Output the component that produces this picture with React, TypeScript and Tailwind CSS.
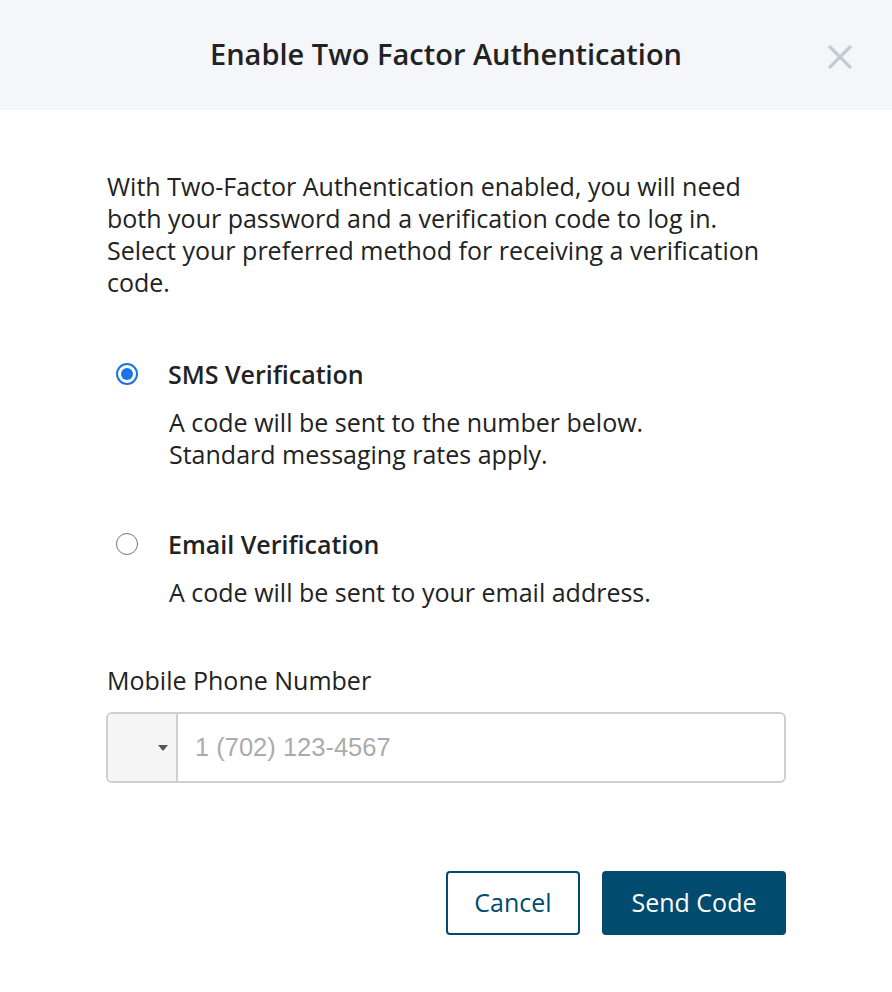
import React, { useState } from "react";

type Method = "sms" | "email";

const FONT = { fontFamily: '"Open Sans", "Noto Sans", sans-serif' };

function Radio({ checked }: { checked: boolean }) {
  return checked ? (
    <span className="flex h-[22px] w-[22px] items-center justify-center rounded-full border-2 border-[#1a73e8] bg-white">
      <span className="block h-[12px] w-[12px] rounded-full bg-[#1a73e8]" />
    </span>
  ) : (
    <span className="block h-[22px] w-[22px] rounded-full border border-[#767676] bg-white" />
  );
}

export default function App() {
  const [method, setMethod] = useState<Method>("sms");

  const options: { id: Method; label: string; lines: string[] }[] = [
    {
      id: "sms",
      label: "SMS Verification",
      lines: [
        "A code will be sent to the number below.",
        "Standard messaging rates apply.",
      ],
    },
    {
      id: "email",
      label: "Email Verification",
      lines: ["A code will be sent to your email address."],
    },
  ];

  return (
    <div className="h-[992px] w-[892px] bg-white text-[#222]" style={FONT}>
      {/* Header */}
      <div className="relative flex h-[110px] items-center justify-center bg-[#f5f6f9] pb-[4px]">
        <h1 className="text-[29px] font-semibold leading-none text-[#222]">
          Enable Two Factor Authentication
        </h1>
        <button className="absolute right-[40px] top-[45px] h-[24px] w-[24px]">
          <svg viewBox="0 0 24 24" width="24" height="24">
            <path
              d="M2 2 L22 22 M22 2 L2 22"
              stroke="#c3cbd6"
              strokeWidth="3.2"
              strokeLinecap="round"
            />
          </svg>
        </button>
      </div>

      {/* Body */}
      <div className="px-[107px] pt-[60px]">
        <p className="text-[25px] leading-[32px]">
          With Two-Factor Authentication enabled, you will need both your
          password and a verification code to log in. Select your preferred
          method for receiving a verification code.
        </p>

        <div className="mt-[60px] flex flex-col gap-[58px]">
          {options.map((opt) => (
            <div
              key={opt.id}
              className="cursor-pointer"
              onClick={() => setMethod(opt.id)}
            >
              <div className="flex items-center">
                <span className="ml-[9px] mr-[30px] block">
                  <Radio checked={method === opt.id} />
                </span>
                <span className="text-[25px] font-semibold leading-[32px]">
                  {opt.label}
                </span>
              </div>
              <div className="ml-[62px] mt-[16px] text-[25px] leading-[32px]">
                {opt.lines.map((line) => (
                  <div key={line}>{line}</div>
                ))}
              </div>
            </div>
          ))}
        </div>

        <label className="mt-[56px] block text-[25px] leading-[32px]">
          Mobile Phone Number
        </label>

        <div className="-ml-[1px] mt-[16px] flex h-[71px] w-[680px] overflow-hidden rounded-[6px] border-2 border-[#cfcfcf]">
          <div className="flex w-[70px] items-center justify-end border-r-2 border-[#cfcfcf] bg-[#f5f5f5] pr-[8px]">
            <span className="h-0 w-0 border-x-[5px] border-t-[6px] border-x-transparent border-t-[#555]" />
          </div>
          <input
            className="flex-1 pl-[17px] text-[25.5px] text-[#333] outline-none placeholder:text-[#ababab]"
            style={{ fontFamily: '"Liberation Sans", Arial, sans-serif' }}
            placeholder="1 (702) 123-4567"
          />
        </div>

        <div className="-mr-[1px] mt-[88px] flex justify-end gap-[22px]">
          <button className="h-[64px] w-[134px] rounded-[4px] border-2 border-[#004b6e] text-[25px] text-[#004b6e]">
            Cancel
          </button>
          <button className="h-[64px] w-[184px] rounded-[4px] bg-[#004b6e] text-[25px] text-white">
            Send Code
          </button>
        </div>
      </div>
    </div>
  );
}
